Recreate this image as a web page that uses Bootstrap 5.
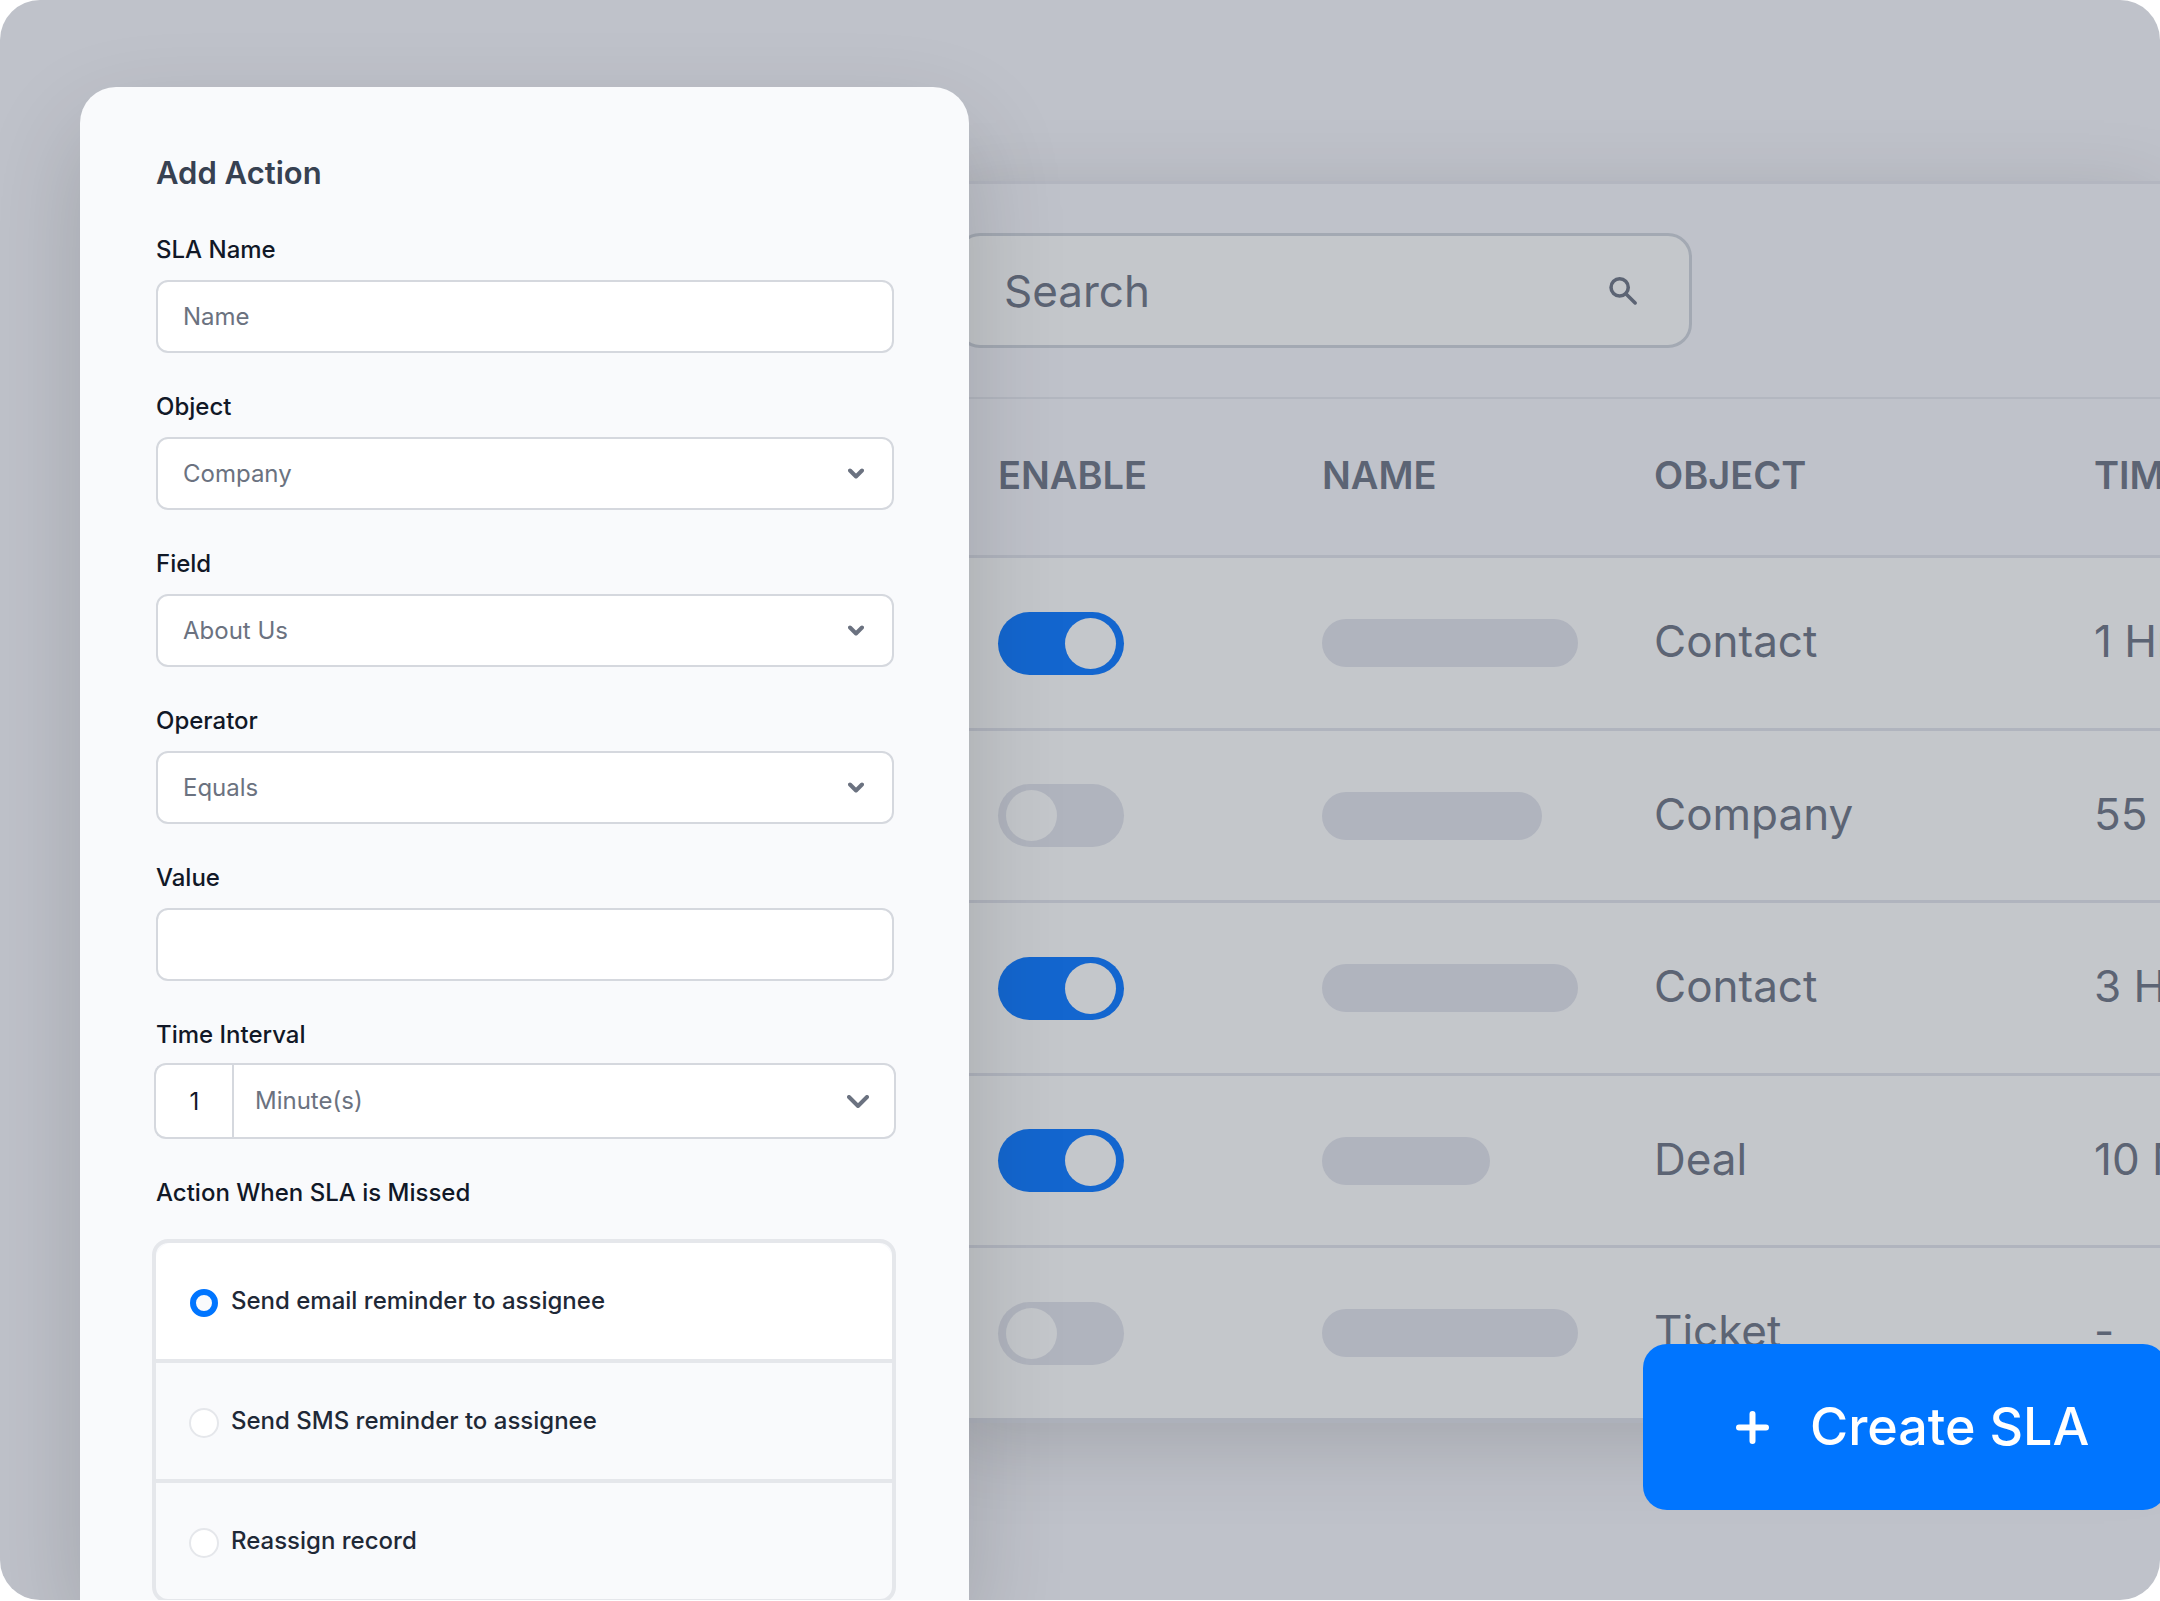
<!DOCTYPE html>
<html lang="en">
<head>
<meta charset="utf-8">
<meta name="viewport" content="width=device-width, initial-scale=1">
<title>Add Action</title>
<link href="https://cdn.jsdelivr.net/npm/bootstrap@5.3.0/dist/css/bootstrap.min.css" rel="stylesheet">
<style>
  :root {
    --stage: #bfc2ca;
    --row: #c4c7cb;
    --line: #b0b4be;
    --muted-ink: #5c6474;
    --blue: #0075ff;
  }
  body { height: 100vh; padding-bottom: 1px; background: #fff; font-family: Inter, "Liberation Sans", sans-serif; }
  .stage { height: 100%; background: var(--stage); border-radius: 40px; }

  /* Action form */
  .action-panel {
    flex: 0 0 889px; margin: 87px 0 0 80px; padding: 66px 75px 0 76px; z-index: 2;
    background: #f9fafc; border-radius: 36px 36px 0 0;
    box-shadow: 0 40px 100px rgba(0, 0, 0, .16);
  }
  .action-title { font-size: 31px; line-height: 40px; font-weight: 600; color: #374151; margin-bottom: 41px; }
  .field { margin-bottom: 38px; }
  .field-name { display: block; font-size: 24px; line-height: 32px; font-weight: 500; color: #111827; margin: 0 0 14px; }
  .field .form-control, .field .form-select {
    height: 73px; padding: 0 25px; font-size: 24px; line-height: 32px; color: #6b7280;
    background-color: #fff; border: 2px solid #d5d8de; border-radius: 12px;
  }
  .field .form-control::placeholder { color: #6b7280; opacity: 1; }
  .field .form-select {
    background-image: url("data:image/svg+xml,%3Csvg xmlns='http://www.w3.org/2000/svg' viewBox='0 0 16 11'%3E%3Cpath fill='none' stroke='%236b7280' stroke-width='4' stroke-linecap='round' stroke-linejoin='round' d='M2 2.500l6 6 6-6'/%3E%3C/svg%3E");
    background-size: 16px 11px; background-position: right 28px center;
  }
  .interval .field-name { margin-bottom: 12px; }
  .interval .input-group { height: 76px; width: auto; margin: 0 -2px; }
  .interval .form-control { flex: 0 0 79px; height: 76px; padding: 0; border-right: 0; text-align: center; color: #111827; }
  .interval .form-select {
    height: 76px; padding-left: 21px;
    background-image: url("data:image/svg+xml,%3Csvg xmlns='http://www.w3.org/2000/svg' viewBox='0 0 22 13'%3E%3Cpath fill='none' stroke='%236b7280' stroke-width='4' stroke-linecap='round' stroke-linejoin='round' d='M2 2l9 9 9-9'/%3E%3C/svg%3E");
    background-size: 22px 13px; background-position: right 25px center;
  }
  .choices-name { margin-bottom: 30px; }
  .choices { margin: 0 -2px 0 -4px; border: 4px solid #e5e7eb; border-radius: 16px; }
  .choices .list-group-item {
    height: 120px; gap: 12px; padding: 0 33px; background: transparent; border: 0;
    border-bottom: 4px solid #e5e7eb; font-size: 24px; line-height: 32px; font-weight: 500; color: #1f2937; cursor: pointer;
  }
  .choices .list-group-item:last-child { height: 116px; border-bottom: 0; }
  .choices .list-group-item:first-child { background: #fff; }
  .choices .form-check-input {
    width: 30px; height: 30px; margin: 4px 0 0; background: #fff; border: 2px solid #e5e7eb;
  }
  .choices .form-check-input:checked { background: #f9fafc; border: 6px solid var(--blue); width: 28px; height: 28px; margin: 4px 1px 0; }

  /* Record list behind the form */
  .records {
    margin: 181px 0 0 -29px; background: var(--row); border-top: 3px solid #b3b6c0; border-bottom: 5px solid #adb1bb;
    box-shadow: 0 20px 80px rgba(0, 0, 0, .15);
  }
  .toolbar { height: 215px; padding: 0 0 0 16px; background: var(--stage); border-bottom: 2px solid #b3b7c0; }
  .search-box {
    width: 736px; height: 115px; padding: 0 50px 0 45px; background: var(--row); border: 3px solid #a3a9b3; border-radius: 24px;
  }
  .search-box input { min-width: 0; padding: 0; border: 0; background: transparent; outline: 0; font-size: 44px; line-height: 64px; color: var(--muted-ink); }
  .search-box input::placeholder { color: var(--muted-ink); opacity: 1; }
  .record-table { table-layout: fixed; width: 100%; border-collapse: separate; border-spacing: 0; color: var(--muted-ink); white-space: nowrap; }
  .record-table th, .record-table td { padding: 0 0 0 58px; vertical-align: middle; border-bottom: 3px solid var(--line); }
  .record-table th { height: 159px; padding-bottom: 4px; background: var(--stage); font-size: 38px; line-height: 48px; font-weight: 600; }
  .record-table td { height: 173px; font-size: 44px; line-height: 64px; }
  .record-table tr:nth-child(even) td { height: 172px; }
  .record-table tbody tr:last-child td { border-bottom: 0; height: 170px; }
  .record-table td.words { padding-bottom: 4px; }
  .col-enable { width: 324px; }
  .col-name { width: 332px; }
  .col-object { width: 440px; }
  .toggle {
    appearance: none; display: block; width: 126px; height: 63px; margin: 0; padding: 0 8px;
    background: var(--line); border-radius: 32px;
  }
  .toggle::before { content: ""; display: block; width: 51px; height: 51px; margin-top: 6px; border-radius: 50%; background: var(--row); }
  .toggle:checked { background: #1366cf; }
  .toggle:checked::before { margin-left: auto; }
  .pill { height: 48px; border-radius: 24px; background: var(--line); }

  .create-btn {
    right: -7px; bottom: 90px; width: 524px; height: 166px; gap: 41px; padding: 0 0 0 93px; z-index: 3;
    border: 0; border-radius: 24px; background: var(--blue); color: #fff; font-size: 52px; line-height: 64px; font-weight: 500;
  }
</style>
</head>
<body>
<div class="stage position-relative overflow-hidden d-flex align-items-start">

  <form class="action-panel align-self-stretch position-relative">
    <h1 class="action-title">Add Action</h1>

    <div class="field">
      <label class="field-name" for="slaName">SLA Name</label>
      <input class="form-control" id="slaName" type="text" placeholder="Name">
    </div>
    <div class="field">
      <label class="field-name" for="object">Object</label>
      <select class="form-select" id="object"><option>Company</option></select>
    </div>
    <div class="field">
      <label class="field-name" for="fieldKey">Field</label>
      <select class="form-select" id="fieldKey"><option>About Us</option></select>
    </div>
    <div class="field">
      <label class="field-name" for="operator">Operator</label>
      <select class="form-select" id="operator"><option>Equals</option></select>
    </div>
    <div class="field">
      <label class="field-name" for="value">Value</label>
      <input class="form-control" id="value" type="text">
    </div>
    <div class="field interval">
      <label class="field-name" for="amount">Time Interval</label>
      <div class="input-group">
        <input class="form-control" id="amount" type="text" inputmode="numeric" value="1">
        <select class="form-select" aria-label="Time unit"><option>Minute(s)</option></select>
      </div>
    </div>

    <div class="field-name choices-name" id="missedTitle">Action When SLA is Missed</div>
    <div class="choices list-group overflow-hidden" role="radiogroup" aria-labelledby="missedTitle">
      <label class="list-group-item d-flex align-items-center">
        <input class="form-check-input flex-shrink-0" type="radio" name="missed" checked>
        <span>Send email reminder to assignee</span>
      </label>
      <label class="list-group-item d-flex align-items-center">
        <input class="form-check-input flex-shrink-0" type="radio" name="missed">
        <span>Send SMS reminder to assignee</span>
      </label>
      <label class="list-group-item d-flex align-items-center">
        <input class="form-check-input flex-shrink-0" type="radio" name="missed">
        <span>Reassign record</span>
      </label>
    </div>
  </form>

  <section class="records flex-grow-1">
    <div class="toolbar d-flex align-items-center">
      <div class="search-box d-flex align-items-center">
        <input class="flex-grow-1" type="search" placeholder="Search" aria-label="Search">
        <svg width="34" height="32" viewBox="0 0 34 32" fill="none" stroke="#5c6474" stroke-width="4" stroke-linecap="round" aria-hidden="true">
          <circle cx="12" cy="12" r="9.7"/><path d="M19 19l10.500 10.500"/>
        </svg>
      </div>
    </div>
    <div class="overflow-hidden">
      <table class="record-table">
        <colgroup><col class="col-enable"><col class="col-name"><col class="col-object"><col></colgroup>
        <thead>
          <tr><th>ENABLE</th><th>NAME</th><th>OBJECT</th><th>TIME</th></tr>
        </thead>
        <tbody>
          <tr>
            <td><input class="toggle" type="checkbox" role="switch" aria-label="Enable contact rule" checked></td>
            <td><div class="pill" style="width:256px"></div></td>
            <td class="words">Contact</td><td class="words">1 Hr</td>
          </tr>
          <tr>
            <td><input class="toggle" type="checkbox" role="switch" aria-label="Enable company rule"></td>
            <td><div class="pill" style="width:220px"></div></td>
            <td class="words">Company</td><td class="words">55 Min</td>
          </tr>
          <tr>
            <td><input class="toggle" type="checkbox" role="switch" aria-label="Enable second contact rule" checked></td>
            <td><div class="pill" style="width:256px"></div></td>
            <td class="words">Contact</td><td class="words">3 Hr</td>
          </tr>
          <tr>
            <td><input class="toggle" type="checkbox" role="switch" aria-label="Enable deal rule" checked></td>
            <td><div class="pill" style="width:168px"></div></td>
            <td class="words">Deal</td><td class="words">10 Min</td>
          </tr>
          <tr>
            <td><input class="toggle" type="checkbox" role="switch" aria-label="Enable ticket rule"></td>
            <td><div class="pill" style="width:256px"></div></td>
            <td class="words">Ticket</td><td class="words">-</td>
          </tr>
        </tbody>
      </table>
    </div>
  </section>

  <button class="create-btn position-absolute d-flex align-items-center" type="button">
    <svg width="33" height="33" viewBox="0 0 33 33" fill="none" stroke="#fff" stroke-width="6" stroke-linecap="round" aria-hidden="true">
      <path d="M16.500 3v27M3 16.500h27"/>
    </svg>
    <span class="text-nowrap">Create SLA</span>
  </button>
</div>
<script src="https://cdn.jsdelivr.net/npm/bootstrap@5.3.0/dist/js/bootstrap.bundle.min.js"></script>
</body>
</html>
